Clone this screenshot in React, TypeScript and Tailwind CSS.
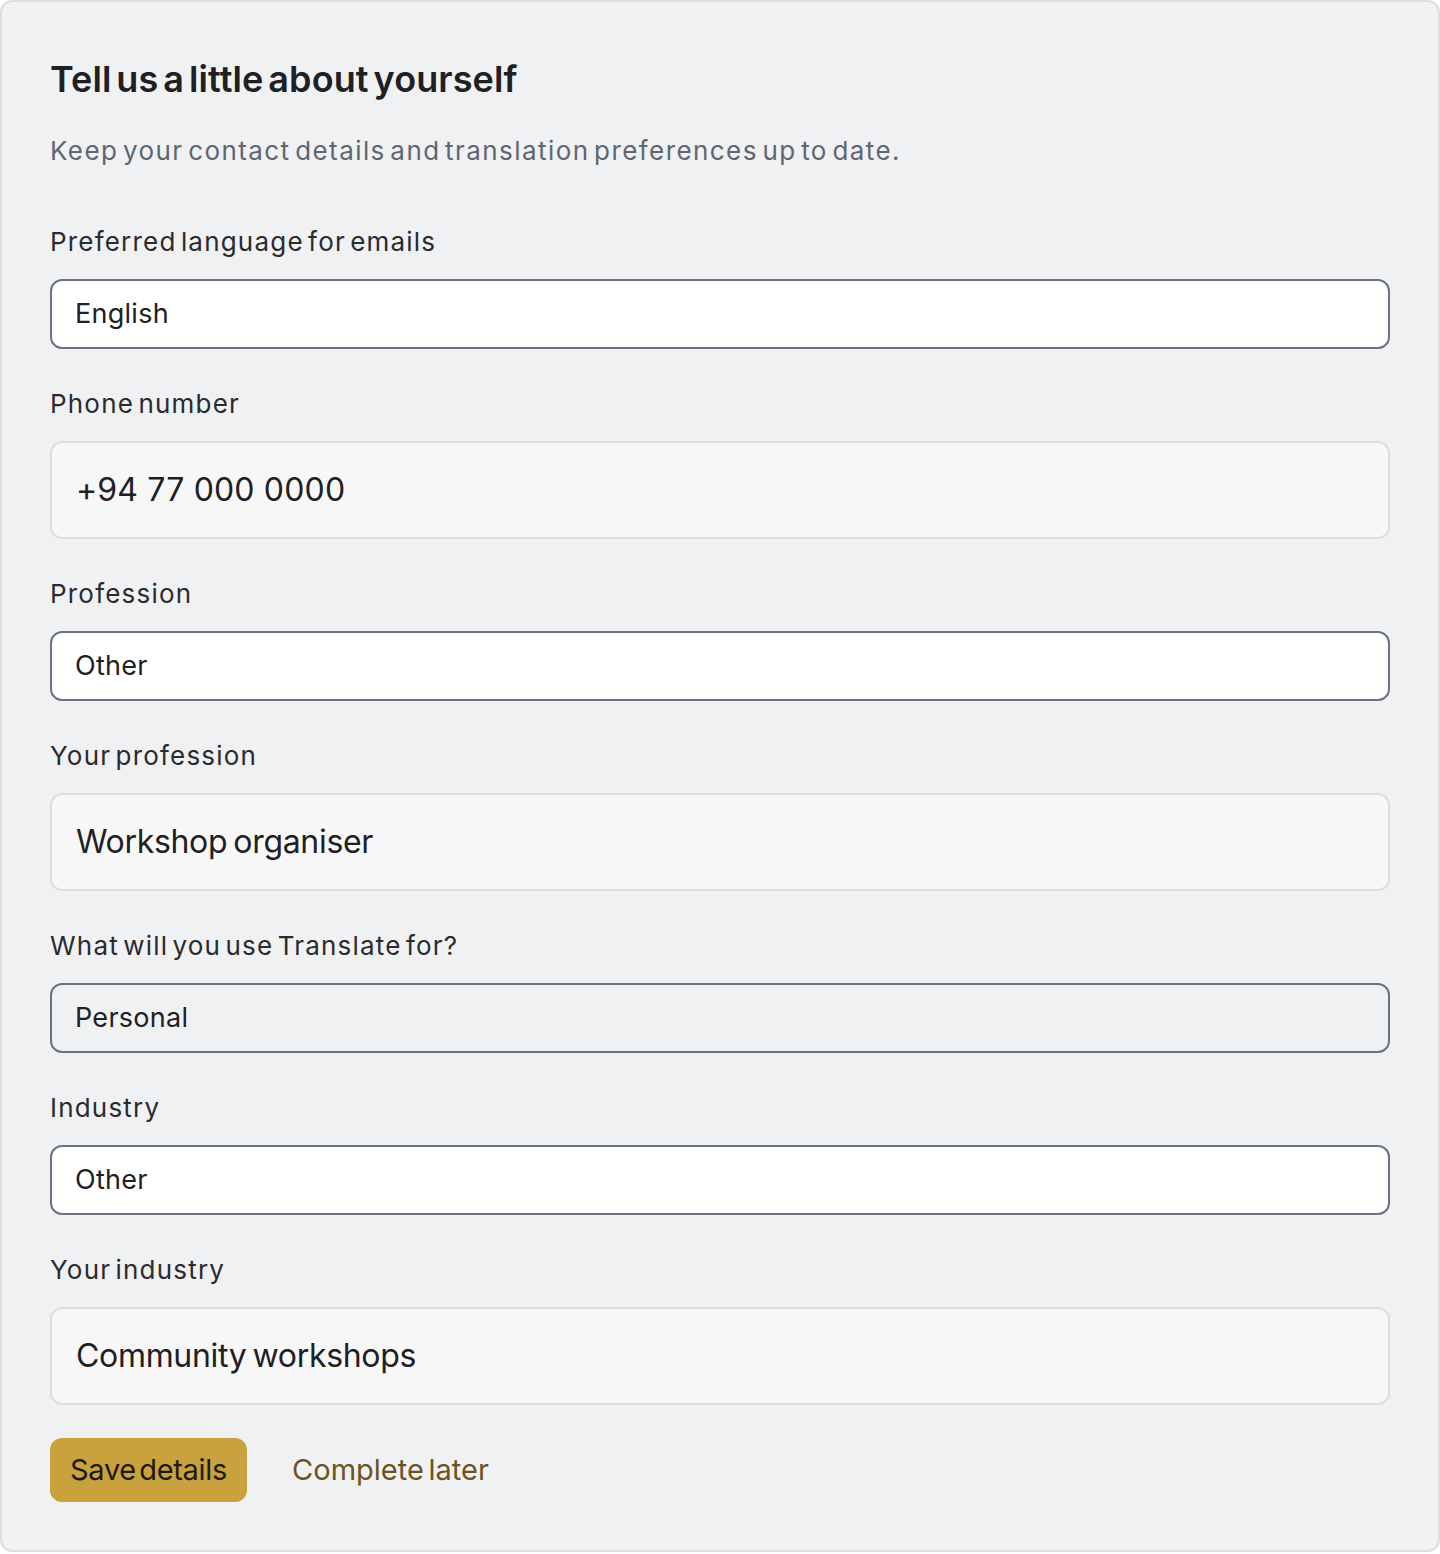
import React from 'react';

type Field =
  | { kind: 'select'; label: string; value: string; muted?: boolean }
  | { kind: 'text'; label: string; value: string; numeric?: boolean };

const fields: Field[] = [
  { kind: 'select', label: 'Preferred language for emails', value: 'English' },
  { kind: 'text', label: 'Phone number', value: '+94 77 000 0000', numeric: true },
  { kind: 'select', label: 'Profession', value: 'Other' },
  { kind: 'text', label: 'Your profession', value: 'Workshop organiser' },
  { kind: 'select', label: 'What will you use Translate for?', value: 'Personal', muted: true },
  { kind: 'select', label: 'Industry', value: 'Other' },
  { kind: 'text', label: 'Your industry', value: 'Community workshops' },
];

const App = () => {
  return (
    <div
      className="w-[1440px] bg-white"
      style={{ fontFamily: 'Inter, "Noto Sans", sans-serif' }}
    >
      <div className="rounded-[12px] border-2 border-[#dcdde1] bg-[#f0f1f3] px-[48px] pt-[48px] pb-[48px]">
        <h1 className="text-[36px] leading-[58px] font-semibold text-[#1f2023] tracking-[0.003em] [word-spacing:-0.12em]">
          Tell us a little about yourself
        </h1>
        <p className="mt-[24px] text-[26px] leading-[38px] text-[#5f6672] tracking-[0.055em] [word-spacing:-0.16em]">
          Keep your contact details and translation preferences up to date.
        </p>

        <div className="mt-[54px] flex flex-col gap-[37px]">
          {fields.map((f) => (
            <div key={f.label} className="flex flex-col gap-[19px]">
              <label className="text-[26px] leading-[36px] text-[#2a2b2e] tracking-[0.046em] [word-spacing:-0.16em]">
                {f.label}
              </label>
              {f.kind === 'select' ? (
                <div
                  className={`flex h-[70px] items-center rounded-[12px] border-2 border-[#6b7280] px-[23px] text-[27px] text-[#1f2023] tracking-[0.01em] ${
                    f.muted ? 'bg-transparent' : 'bg-white'
                  }`}
                >
                  {f.value}
                </div>
              ) : (
                <div
                  className={`flex h-[98px] items-center rounded-[12px] border-2 border-[#dcdde1] bg-[#f7f7f7] px-[24px] text-[32px] text-[#1f2023] ${
                    f.numeric ? 'tracking-[0.005em]' : 'tracking-[-0.01em] [word-spacing:-0.08em]'
                  }`}
                >
                  {f.value}
                </div>
              )}
            </div>
          ))}
        </div>

        <div className="mt-[33px] flex items-center gap-[45px]">
          <button className="h-[64px] rounded-[12px] bg-[#c9a23d] px-[20px] text-[29px] text-[#1e1a10] tracking-[-0.01em] [word-spacing:-0.16em]">
            Save details
          </button>
          <button className="text-[29px] text-[#6b5420] [word-spacing:-0.12em]">
            Complete later
          </button>
        </div>
      </div>
    </div>
  );
};

export default App;
